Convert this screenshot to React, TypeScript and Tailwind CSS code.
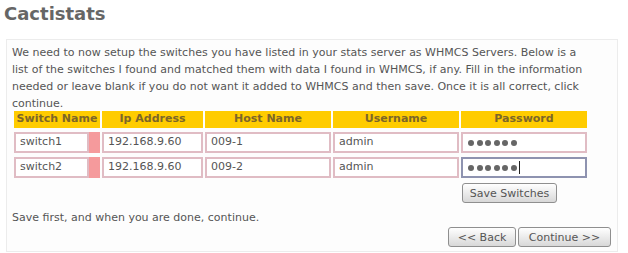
const cols = ["Switch Name", "Ip Address", "Host Name", "Username", "Password"];

const rows = [
  { name: "switch1", ip: "192.168.9.60", host: "009-1", user: "admin", focused: false },
  { name: "switch2", ip: "192.168.9.60", host: "009-2", user: "admin", focused: true },
];

function Field({ value, focused = false }: { value: string; focused?: boolean }) {
  return (
    <div
      className={`flex h-[21px] items-center border-2 bg-white pl-[4px] text-[11px] text-[#555] ${
        focused ? "border-[#8e93b0]" : "border-[#e0bcc4]"
      }`}
    >
      {value}
    </div>
  );
}

function Button({ label, className = "" }: { label: string; className?: string }) {
  return (
    <button
      type="button"
      className={`h-[20px] rounded-[3px] border border-[#8f8f8f] bg-gradient-to-b from-white to-[#d8d8d8] text-[11px] leading-none text-[#555] ${className}`}
    >
      {label}
    </button>
  );
}

export default function App() {
  return (
    <div className="h-[253px] w-[628px] bg-white pt-[2px] font-['DejaVu_Sans',sans-serif]">
      <h1 className="pl-[4px] text-[18px] font-bold leading-[24px] text-[#666]">Cactistats</h1>
      <div className="ml-[6px] mt-[13px] h-[213px] w-[612px] border border-[#ececec] bg-[#fdfdfd] px-[5px] pt-[4px]">
        <p className="whitespace-nowrap text-[11px] leading-[17px] text-[#555]">
          We need to now setup the switches you have listed in your stats server as WHMCS Servers. Below is a
          <br />
          list of the switches I found and matched them with data I found in WHMCS, if any. Fill in the information
          <br />
          needed or leave blank if you do not want it added to WHMCS and then save. Once it is all correct, click
          <br />
          continue.
        </p>
        <div className="ml-[2px] -mt-[1px] grid grid-cols-[86px_101px_126px_126px_126px] gap-x-[2px] gap-y-[4px]">
          {cols.map((c) => (
            <div
              key={c}
              className="flex h-[17px] items-center justify-center bg-[#ffcc00] text-[11px] font-bold text-[#7d6628]"
            >
              {c}
            </div>
          ))}
          {rows.map((r) => (
            <div key={r.name} className="contents">
              <div className="flex">
                <div className="w-[75px]">
                  <Field value={r.name} />
                </div>
                <div className="h-[21px] flex-1 bg-[#f59a9c]" />
              </div>
              <Field value={r.ip} />
              <Field value={r.host} />
              <Field value={r.user} />
              <div
                className={`flex h-[21px] items-center gap-[2.5px] border-2 bg-white pl-[5px] ${
                  r.focused ? "border-[#8e93b0]" : "border-[#e0bcc4]"
                }`}
              >
                {[0, 1, 2, 3, 4, 5].map((i) => (
                  <span key={i} className="h-[6px] w-[6px] rounded-full bg-[#666]" />
                ))}
                {r.focused ? <span className="h-[13px] w-px bg-[#222]" /> : null}
              </div>
            </div>
          ))}
        </div>
        <div className="mt-[5px] flex">
          <Button label="Save Switches" className="ml-[450px] w-[95px]" />
        </div>
        <p className="mt-[6px] text-[11px] leading-[17px] text-[#555]">Save first, and when you are done, continue.</p>
        <div className="mt-[1px] flex justify-end gap-[2px] pr-[1px]">
          <Button label="<< Back" className="w-[68px]" />
          <Button label="Continue >>" className="w-[93px]" />
        </div>
      </div>
    </div>
  );
}
